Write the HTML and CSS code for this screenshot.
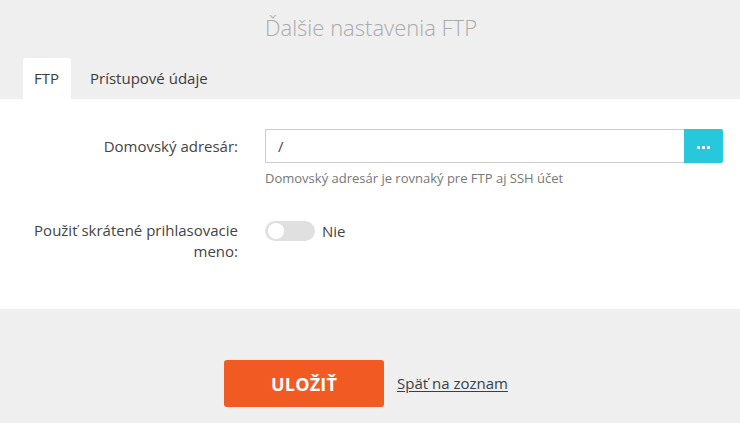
FILE: index.html
```html
<!DOCTYPE html>
<html lang="sk">
<head>
<meta charset="utf-8">
<title>Ďalšie nastavenia FTP</title>
<link rel="stylesheet" href="styles.css">
</head>
<body>
  <h1 class="title">Ďalšie nastavenia FTP</h1>
  <nav class="tabs">
    <a class="tab active">FTP</a>
    <a class="tab">Prístupové údaje</a>
  </nav>
  <section class="panel">
    <div class="row">
      <label class="label">Domovský adresár:</label>
      <div class="field">
        <div class="input-group">
          <input class="input" type="text" value="/">
          <button class="browse">
            <span class="dots"><i></i><i></i><i></i></span>
          </button>
        </div>
        <div class="help">Domovský adresár je rovnaký pre FTP aj SSH účet</div>
      </div>
    </div>
    <div class="row row-toggle">
      <label class="label">Použiť skrátené prihlasovacie<br>meno:</label>
      <div class="field toggle-field">
        <span class="switch"><span class="knob"></span></span>
        <span class="toggle-text">Nie</span>
      </div>
    </div>
  </section>
  <footer class="actions">
    <button class="save">ULOŽIŤ</button>
    <a class="back" href="#">Späť na zoznam</a>
  </footer>
</body>
</html>
```
FILE: styles.css
```css
html, body {
  margin: 0;
  padding: 0;
}
body {
  background: #efefef;
  font-family: "Open Sans", "Liberation Sans", sans-serif;
  color: #444;
  width: 740px;
  height: 423px;
  overflow: hidden;
}
.title {
  margin: 0;
  height: 58px;
  line-height: 54px;
  text-align: center;
  font-size: 22px;
  font-weight: 300;
  color: #aaaaaa;
  padding-left: 2px;
}
.tabs {
  display: flex;
  padding-left: 23px;
  height: 41px;
}
.tab {
  display: flex;
  align-items: center;
  padding: 0 12px 2px 11px;
  margin-right: 8px;
  font-size: 15px;
  color: #3d3d3d;
  border-radius: 3px 3px 0 0;
}
.tab.active {
  background: #fff;
}
.panel {
  background: #fff;
  padding: 30px 17px 47px 0;
  display: flex;
  flex-direction: column;
  gap: 33px;
}
.row {
  display: grid;
  grid-template-columns: 238px 1fr;
  column-gap: 27px;
}
.label {
  text-align: right;
  font-size: 15px;
  line-height: 21px;
  color: #444;
  padding-top: 7px;
}
.row-toggle .label {
  padding-top: 0;
}
.input-group {
  display: flex;
  height: 34px;
}
.input {
  flex: 1;
  box-sizing: border-box;
  height: 34px;
  border: 1px solid #cccccc;
  border-right: none;
  padding: 0 12px;
  font-family: inherit;
  font-size: 15px;
  color: #444;
  outline: none;
  background: #fff;
}
.browse {
  width: 39px;
  height: 34px;
  border: none;
  background: #27c7dc;
  padding: 0;
  display: flex;
  align-items: center;
  justify-content: center;
  border-radius: 0 2px 2px 0;
}
.dots {
  display: flex;
  gap: 2px;
  margin-top: 2px;
}
.dots i {
  width: 3px;
  height: 3px;
  background: #fff;
  display: block;
}
.help {
  margin-top: 6px;
  font-size: 13px;
  line-height: 18px;
  color: #777;
}
.toggle-field {
  display: flex;
  align-items: center;
  gap: 7px;
  height: 21px;
}
.switch {
  width: 50px;
  height: 20px;
  border-radius: 10px;
  background: #e0e0e0;
  position: relative;
  margin-top: 1px;
}
.knob {
  position: absolute;
  left: 3px;
  top: 2px;
  width: 16px;
  height: 16px;
  border-radius: 50%;
  background: #fff;
}
.toggle-text {
  font-size: 15px;
  color: #444;
}
.actions {
  display: flex;
  justify-content: center;
  align-items: center;
  gap: 13px;
  padding-top: 51px;
  padding-right: 8px;
}
.save {
  width: 160px;
  height: 47px;
  border: none;
  border-radius: 3px;
  background: #f25a24;
  color: #fff;
  font-family: inherit;
  font-weight: 700;
  font-size: 18px;
  letter-spacing: 0.2px;
}
.back {
  font-size: 15px;
  color: #363f4a;
  text-decoration: underline;
  text-underline-offset: 2px;
  margin-top: -2px;
}
```
